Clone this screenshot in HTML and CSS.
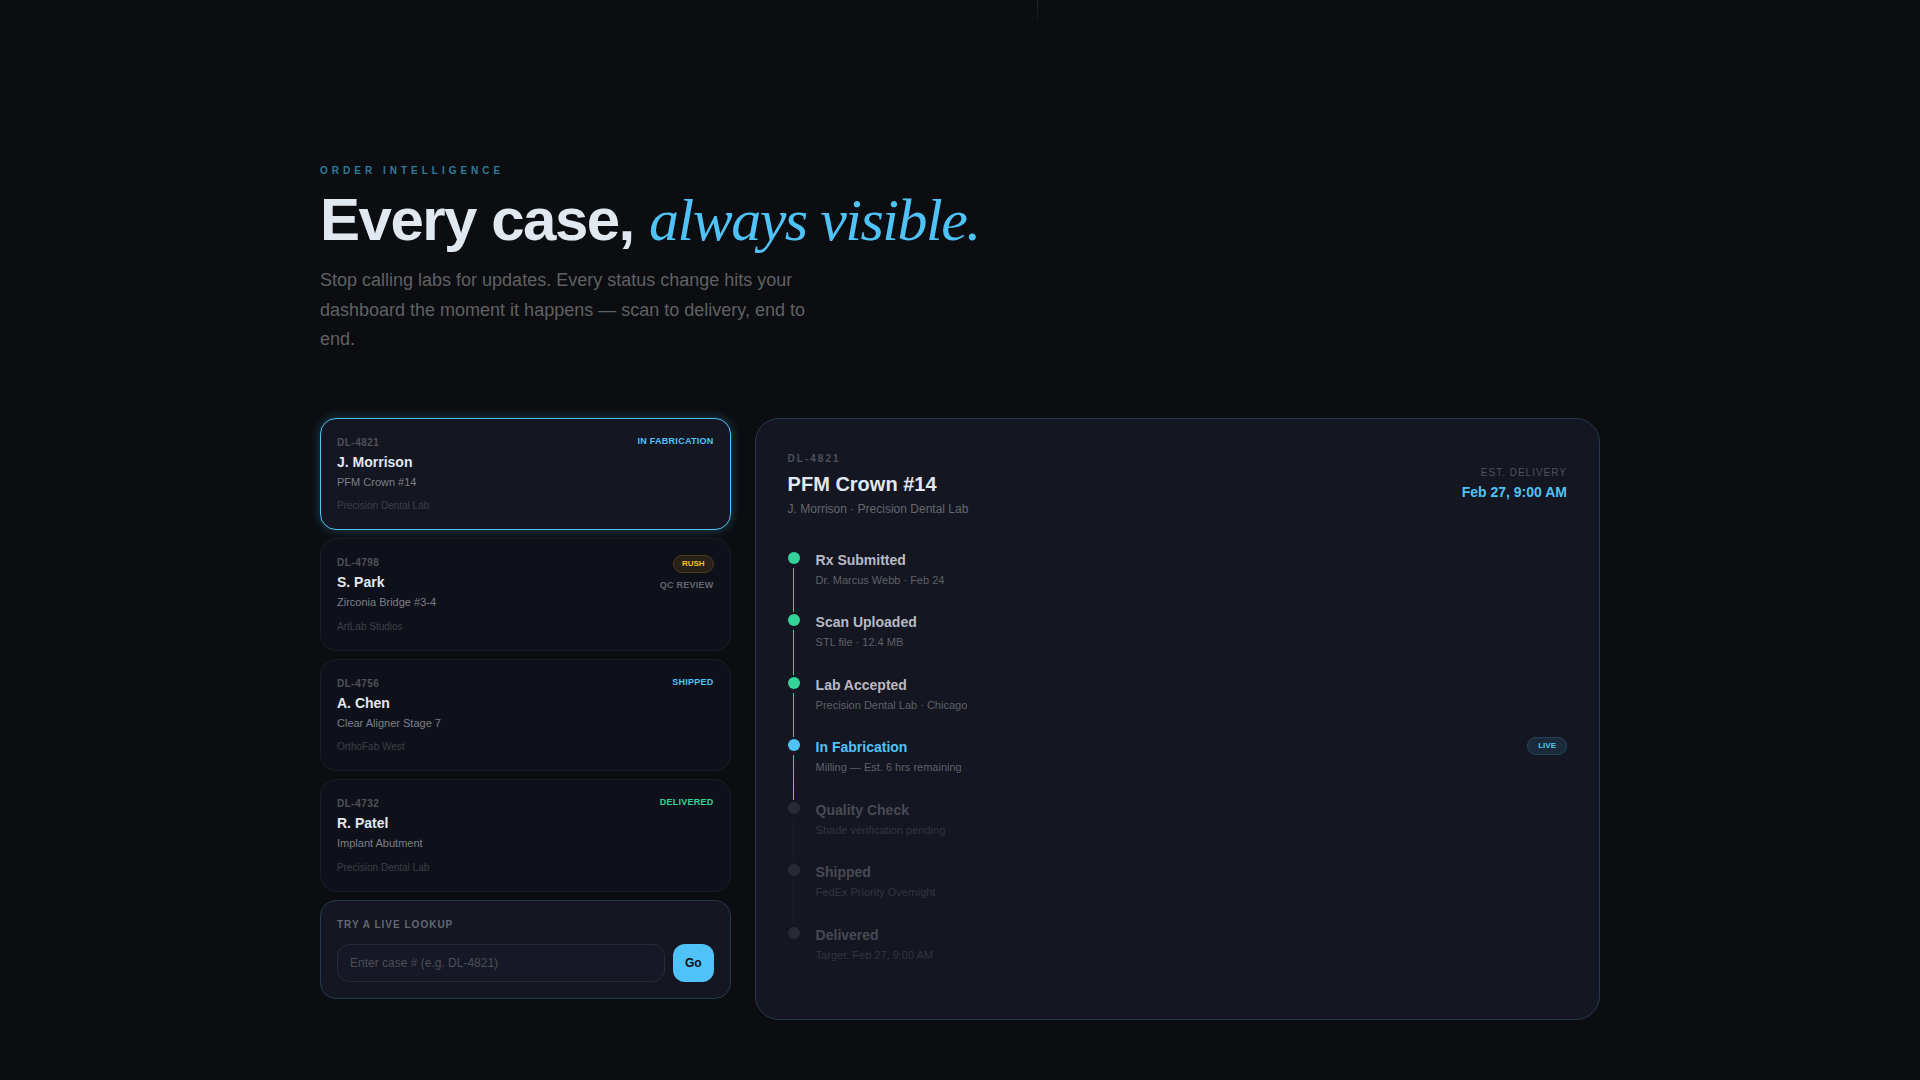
FILE: index.html
```html
<!DOCTYPE html>
<html lang="en">
<head>
  <meta charset="UTF-8" />
  <meta name="viewport" content="width=device-width, initial-scale=1" />
  <title>Order Intelligence</title>
  <link rel="stylesheet" href="styles.css">
</head>
<body>
  <div class="section-divider"></div>

  <section class="orders">
    <div class="container">
      <p class="eyebrow">Order Intelligence</p>
      <h2>Every case, <em>always visible.</em></h2>
      <p class="lead">Stop calling labs for updates. Every status change hits your dashboard the moment it happens — scan to delivery, end to end.</p>

      <div class="orders-grid">
        <!-- Case list -->
        <div class="case-list">
          <button type="button" class="case-card active">
            <span class="case-info">
              <span class="case-id">DL-4821</span>
              <span class="case-name">J. Morrison</span>
              <span class="case-type">PFM Crown #14</span>
              <span class="case-lab">Precision Dental Lab</span>
            </span>
            <span class="case-side">
              <span class="status status-blue">In Fabrication</span>
            </span>
          </button>

          <button type="button" class="case-card">
            <span class="case-info">
              <span class="case-id">DL-4798</span>
              <span class="case-name">S. Park</span>
              <span class="case-type">Zirconia Bridge #3-4</span>
              <span class="case-lab">ArtLab Studios</span>
            </span>
            <span class="case-side">
              <span class="badge badge-rush">RUSH</span>
              <span class="status">QC Review</span>
            </span>
          </button>

          <button type="button" class="case-card">
            <span class="case-info">
              <span class="case-id">DL-4756</span>
              <span class="case-name">A. Chen</span>
              <span class="case-type">Clear Aligner Stage 7</span>
              <span class="case-lab">OrthoFab West</span>
            </span>
            <span class="case-side">
              <span class="status status-blue">Shipped</span>
            </span>
          </button>

          <button type="button" class="case-card">
            <span class="case-info">
              <span class="case-id">DL-4732</span>
              <span class="case-name">R. Patel</span>
              <span class="case-type">Implant Abutment</span>
              <span class="case-lab">Precision Dental Lab</span>
            </span>
            <span class="case-side">
              <span class="status status-green">Delivered</span>
            </span>
          </button>

          <form class="lookup">
            <label for="case-number">Try a live lookup</label>
            <div class="lookup-row">
              <input type="text" id="case-number" name="case-number" placeholder="Enter case # (e.g. DL-4821)">
              <button type="submit">Go</button>
            </div>
          </form>
        </div>

        <!-- Case detail -->
        <div class="detail">
          <div class="detail-header">
            <div>
              <p class="detail-id">DL-4821</p>
              <h3>PFM Crown #14</h3>
              <p class="detail-sub">J. Morrison · Precision Dental Lab</p>
            </div>
            <div class="delivery">
              <p class="delivery-label">Est. Delivery</p>
              <p class="delivery-date">Feb 27, 9:00 AM</p>
            </div>
          </div>

          <ol class="timeline">
            <li class="step done">
              <div class="track"><span class="dot"></span><span class="line"></span></div>
              <div class="step-body">
                <h4>Rx Submitted</h4>
                <p>Dr. Marcus Webb · Feb 24</p>
              </div>
            </li>
            <li class="step done">
              <div class="track"><span class="dot"></span><span class="line"></span></div>
              <div class="step-body">
                <h4>Scan Uploaded</h4>
                <p>STL file · 12.4 MB</p>
              </div>
            </li>
            <li class="step done">
              <div class="track"><span class="dot"></span><span class="line"></span></div>
              <div class="step-body">
                <h4>Lab Accepted</h4>
                <p>Precision Dental Lab · Chicago</p>
              </div>
            </li>
            <li class="step current">
              <div class="track"><span class="dot"></span><span class="line"></span></div>
              <div class="step-body">
                <h4>In Fabrication</h4>
                <p>Milling — Est. 6 hrs remaining</p>
              </div>
              <span class="badge badge-live">LIVE</span>
            </li>
            <li class="step pending">
              <div class="track"><span class="dot"></span><span class="line"></span></div>
              <div class="step-body">
                <h4>Quality Check</h4>
                <p>Shade verification pending</p>
              </div>
            </li>
            <li class="step pending">
              <div class="track"><span class="dot"></span><span class="line"></span></div>
              <div class="step-body">
                <h4>Shipped</h4>
                <p>FedEx Priority Overnight</p>
              </div>
            </li>
            <li class="step pending">
              <div class="track"><span class="dot"></span></div>
              <div class="step-body">
                <h4>Delivered</h4>
                <p>Target: Feb 27, 9:00 AM</p>
              </div>
            </li>
          </ol>
        </div>
      </div>
    </div>
  </section>
</body>
</html>
```
FILE: styles.css
```css
* {
  box-sizing: border-box;
  margin: 0;
  padding: 0;
}

body {
  background: #0b0d10;
  color: #e2e8f0;
  font-family: 'Liberation Sans', Arial, sans-serif;
  line-height: 1.5;
}

button, input {
  font-family: inherit;
  line-height: inherit;
}

/* thin rule running down from the section above */
.section-divider {
  width: 1px;
  height: 20px;
  margin-left: 54%;
  background: linear-gradient(#24262b, #16181c);
}

.orders {
  padding: 143px 40px 60px;
}

.container {
  max-width: 1280px;
  margin: 0 auto;
}

.eyebrow {
  font-size: 10px;
  font-weight: 700;
  letter-spacing: 4px;
  text-transform: uppercase;
  color: #2f7b99;
}

h2 {
  margin-top: 10px;
  font-size: 60px;
  line-height: 63px;
  letter-spacing: -0.025em;
}

h2 em {
  font-family: 'Liberation Serif', 'Times New Roman', serif;
  font-weight: 400;
  color: #4fc3f7;
}

.lead {
  max-width: 500px;
  margin-top: 14px;
  font-size: 18px;
  line-height: 1.64;
  color: #606164;
}

.orders-grid {
  display: grid;
  grid-template-columns: 17fr 35fr;
  gap: 24px;
  align-items: start;
  margin-top: 63px;
}

/* Case list */
.case-list {
  display: flex;
  flex-direction: column;
  gap: 8px;
}

.case-card {
  display: flex;
  justify-content: space-between;
  align-items: flex-start;
  padding: 16px;
  background: #0f111a;
  border: 1px solid #1b1d25;
  border-radius: 16px;
  color: inherit;
  text-align: left;
  cursor: pointer;
}

.case-card.active {
  background: #141621;
  border-color: #4fc3f7;
  box-shadow: 0 0 12px rgba(79, 195, 247, 0.3);
}

.case-info {
  display: flex;
  flex-direction: column;
}

.case-id {
  font-size: 10px;
  font-weight: 700;
  letter-spacing: 0.05em;
  color: #4f5158;
}

.case-name {
  margin-top: 2px;
  font-size: 14px;
  font-weight: 700;
}

.case-type {
  margin-top: 1px;
  font-size: 11px;
  color: #7d7f86;
}

.case-lab {
  margin-top: 8px;
  font-size: 10px;
  color: #3d3f46;
}

.case-side {
  display: flex;
  flex-direction: column;
  align-items: flex-end;
  gap: 6px;
}

.status {
  font-size: 9px;
  font-weight: 700;
  letter-spacing: 0.03em;
  text-transform: uppercase;
  color: #65676e;
}

.status-blue {
  color: #4fc3f7;
}

.status-green {
  color: #34d399;
}

.badge {
  padding: 2px 8px;
  border: 1px solid;
  border-radius: 20px;
  font-size: 8px;
  font-weight: 700;
}

.badge-rush {
  background: #272119;
  border-color: #4a3b1c;
  color: #fbbf24;
}

.badge-live {
  padding: 2px 10px;
  background: #1a2a3a;
  border-color: #244456;
  color: #4fc3f7;
}

.lookup {
  padding: 16px;
  background: #141621;
  border: 1px solid #263a4c;
  border-radius: 16px;
}

.lookup label {
  display: block;
  font-size: 10px;
  font-weight: 700;
  letter-spacing: 1px;
  text-transform: uppercase;
  color: #65676e;
}

.lookup-row {
  display: flex;
  gap: 8px;
  margin-top: 12px;
}

.lookup input {
  flex: 1;
  min-width: 0;
  padding: 9px 12px;
  background: #161825;
  border: 1px solid #282a34;
  border-radius: 12px;
  font-size: 12px;
  color: #e2e8f0;
}

.lookup input::placeholder {
  color: #4c4e58;
}

.lookup button {
  padding: 10px 12px;
  background: #4fc3f7;
  border: none;
  border-radius: 12px;
  font-size: 12px;
  font-weight: 700;
  color: #0a0c10;
  cursor: pointer;
}

/* Case detail */
.detail {
  padding: 32px;
  background: #141621;
  border: 1px solid #263a4c;
  border-radius: 24px;
}

.detail-header {
  display: flex;
  justify-content: space-between;
  align-items: center;
  margin-bottom: 32px;
}

.detail-id {
  font-size: 10px;
  font-weight: 700;
  letter-spacing: 2px;
  color: #4f5158;
}

h3 {
  margin-top: 3px;
  font-size: 20px;
}

.detail-sub {
  margin-top: 1px;
  font-size: 12px;
  color: #65676e;
}

.delivery {
  text-align: right;
}

.delivery-label {
  font-size: 10px;
  letter-spacing: 1px;
  text-transform: uppercase;
  color: #4f5158;
}

.delivery-date {
  margin-top: 2px;
  font-size: 14px;
  font-weight: 700;
  color: #4fc3f7;
}

.timeline {
  list-style: none;
}

.step {
  display: flex;
  gap: 16px;
}

.track {
  display: flex;
  flex-direction: column;
  align-items: center;
  padding-top: 2px;
}

.dot {
  width: 12px;
  height: 12px;
  border-radius: 50%;
  background: #282a33;
}

.line {
  flex: 1;
  width: 1px;
  margin-top: 4px;
  background: #1f212a;
}

.step-body {
  flex: 1;
  padding-bottom: 24px;
}

.step h4 {
  font-size: 14px;
  color: #b9bac4;
}

.step p {
  margin-top: 1px;
  font-size: 11px;
  color: #5f6168;
}

.done .dot,
.done .line {
  background: #34d399;
}

.current .dot {
  background: #4fc3f7;
}

.current .line {
  background: linear-gradient(#34d399, #4fc3f7);
}

.current h4 {
  color: #4fc3f7;
}

.current .badge {
  align-self: flex-start;
}

.pending h4 {
  color: #484a53;
}

.step.pending p {
  color: #33353d;
}
```
